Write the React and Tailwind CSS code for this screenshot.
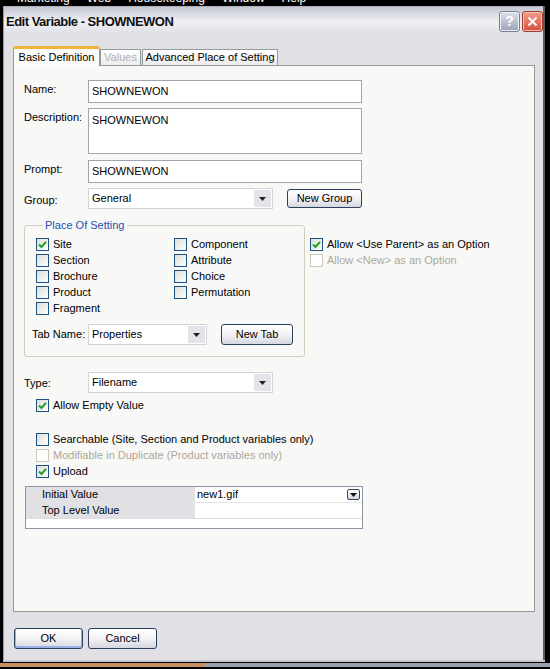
import React from "react";

const Check = () => (
  <svg width="11" height="11" viewBox="0 0 11 11">
    <path d="M2 5.5 L4.5 8 L9 2.8" fill="none" stroke="#21a121" strokeWidth="2" />
  </svg>
);

function Cb({ checked, disabled, label }) {
  return (
    <div className="flex items-center h-[16px]">
      <span
        className={
          disabled
            ? "w-[13px] h-[13px] border border-[#cac8bb] bg-white flex items-center justify-center shrink-0"
            : "w-[13px] h-[13px] border border-[#1c5180] bg-gradient-to-br from-[#dcdcd7] to-white flex items-center justify-center shrink-0"
        }
      >
        {checked && <Check />}
      </span>
      <span className={disabled ? "ml-[4px] text-[#aca899] whitespace-nowrap" : "ml-[4px] text-black whitespace-nowrap"}>
        {label}
      </span>
    </div>
  );
}

function Select({ value, className }) {
  return (
    <div className={"flex items-stretch border border-[#d4d4d4] bg-white " + className}>
      <span className="flex-1 pl-[3px] flex items-center text-[11px] text-black">{value}</span>
      <span className="w-[17px] m-[1px] bg-[#e3e3e9] flex items-center justify-center">
        <svg width="7" height="4" viewBox="0 0 7 4">
          <path d="M0 0 H7 L3.5 4 Z" fill="#222" />
        </svg>
      </span>
    </div>
  );
}

function Btn({ children, className, def }) {
  return (
    <div
      className={
        "flex items-center justify-center rounded-[3px] border border-[#2c3e5e] bg-gradient-to-b from-white via-[#f3f3f6] to-[#d6d6e0] text-[11px] text-black " +
        (def ? "shadow-[inset_0_-1px_0_1px_#9db1e6] " : "") +
        className
      }
    >
      {children}
    </div>
  );
}

export default function App() {
  return (
    <div className="w-[550px] h-[669px] bg-black overflow-hidden flex flex-col font-['Liberation_Sans',Arial,sans-serif] text-[11px]">
      {/* clipped menu strip */}
      <div className="h-[6px] overflow-hidden shrink-0">
        <div className="flex text-white text-[12px] leading-[14px] -mt-[9px] pl-[17px] gap-[17px]">
          <span>Marketing</span>
          <span>Web</span>
          <span>Housekeeping</span>
          <span>Window</span>
          <span>Help</span>
        </div>
      </div>

      {/* window */}
      <div className="ml-[3px] w-[542px] h-[654px] shrink-0 flex flex-col border-l border-[#9a9aa6] border-r-[2px] border-r-[#5a5a64]">
        {/* title bar */}
        <div className="h-[30px] shrink-0 flex items-center justify-between bg-gradient-to-b from-[#c4c6d2] via-[#f0f0f4] to-[#dcdde5] border-t border-[#b0b0bc]">
          <span className="pl-[2px] font-bold text-[13px] tracking-[-0.5px] text-[#101010]">Edit Variable - SHOWNEWON</span>
          <div className="flex gap-[2px]">
            <div className="w-[21px] h-[21px] rounded-[3px] border border-[#7a8094] bg-gradient-to-b from-[#dfe2ec] to-[#9aa2b8] flex items-center justify-center text-white font-bold text-[14px] shadow-[inset_0_0_0_1px_#eef0f6]">
              ?
            </div>
            <div className="w-[21px] h-[21px] rounded-[3px] border border-[#a43a30] bg-gradient-to-b from-[#ef9c88] to-[#d4503e] flex items-center justify-center shadow-[inset_0_0_0_1px_#f6c2b6]">
              <svg width="11" height="11" viewBox="0 0 11 11">
                <path d="M1.5 1.5 L9.5 9.5 M9.5 1.5 L1.5 9.5" stroke="white" strokeWidth="2" />
              </svg>
            </div>
          </div>
        </div>

        {/* body */}
        <div className="flex-1 bg-[#e1e0e5] flex flex-col pl-[9px] pt-[9px]">
          {/* tabs */}
          <div className="flex items-end h-[20px]">
            <div className="h-[20px] w-[87px] bg-[#fbfbfa] border-x border-[#919b9c] rounded-t-[3px] border-t-[3px] border-t-[#f0b43c] flex items-center justify-center text-[11px] text-black relative z-10 -mb-px">
              Basic Definition
            </div>
            <div className="h-[16px] w-[41px] bg-gradient-to-b from-white to-[#ececec] border border-b-0 border-[#919b9c] flex items-center justify-center text-[11px] text-[#b0b0b0]">
              Values
            </div>
            <div className="h-[16px] w-[136px] ml-[1px] bg-gradient-to-b from-white to-[#ececec] border border-b-0 border-[#919b9c] flex items-center justify-center text-[11px] text-black">
              Advanced Place of Setting
            </div>
          </div>

          {/* panel */}
          <div className="w-[522px] h-[547px] border border-[#919b9c] bg-[#f8f8f7] flex flex-col pl-[10px] pt-[14px] text-[11px]">
            <div className="flex items-start">
              <span className="w-[64px] pt-[1px]">Name:</span>
              <div className="w-[274px] h-[23px] border border-[#a0a6ae] bg-white flex items-center pl-[3px]">SHOWNEWON</div>
            </div>
            <div className="flex items-start mt-[5px]">
              <span className="w-[64px] pt-[1px]">Description:</span>
              <div className="w-[274px] h-[46px] border border-[#a0a6ae] bg-white pl-[3px] pt-[3px]">SHOWNEWON</div>
            </div>
            <div className="flex items-start mt-[6px]">
              <span className="w-[64px] pt-[1px]">Prompt:</span>
              <div className="w-[274px] h-[23px] border border-[#a0a6ae] bg-white flex items-center pl-[3px]">SHOWNEWON</div>
            </div>
            <div className="flex items-start mt-[5px]">
              <span className="w-[64px] pt-[4px]">Group:</span>
              <Select value="General" className="w-[185px] h-[21px]" />
              <Btn className="ml-[14px] mt-[1px] w-[75px] h-[19px]">New Group</Btn>
            </div>

            <div className="flex items-start mt-[10px]">
              <fieldset className="w-[281px] border border-[#d0d0bf] rounded-[3px] pl-[11px] pb-[11px]">
                <legend className="ml-[7px] px-[2px] text-[#1f4fb0] text-[11px] leading-[13px]">Place Of Setting</legend>
                <div className="grid grid-cols-[138px_1fr] mt-[4px]">
                  <Cb checked label="Site" />
                  <Cb label="Component" />
                  <Cb label="Section" />
                  <Cb label="Attribute" />
                  <Cb label="Brochure" />
                  <Cb label="Choice" />
                  <Cb label="Product" />
                  <Cb label="Permutation" />
                  <Cb label="Fragment" />
                </div>
                <div className="flex items-center mt-[8px] -ml-[4px]">
                  <span className="w-[56px] whitespace-nowrap">Tab Name:</span>
                  <Select value="Properties" className="w-[119px] h-[21px]" />
                  <Btn className="ml-[14px] w-[72px] h-[21px]">New Tab</Btn>
                </div>
              </fieldset>
              <div className="ml-[5px] mt-[17px] flex flex-col">
                <Cb checked label="Allow <Use Parent> as an Option" />
                <Cb disabled label="Allow <New> as an Option" />
              </div>
            </div>

            <div className="flex items-start mt-[15px]">
              <span className="w-[64px] pt-[3px]">Type:</span>
              <Select value="Filename" className="w-[185px] h-[21px]" />
            </div>
            <div className="ml-[12px] mt-[4px]">
              <Cb checked label="Allow Empty Value" />
            </div>
            <div className="ml-[12px] mt-[18px] flex flex-col">
              <Cb label="Searchable (Site, Section and Product variables only)" />
              <Cb disabled label="Modifiable in Duplicate (Product variables only)" />
              <Cb checked label="Upload" />
            </div>

            <div className="ml-[1px] mt-[7px] w-[338px] h-[43px] border border-[#8c96a4] bg-white flex flex-col">
              <div className="flex h-[16px] border-b border-[#e4e4e4]">
                <div className="w-[169px] bg-[#e1e0e5] pl-[16px] flex items-center">Initial Value</div>
                <div className="flex-1 flex items-center pl-[2px] justify-between pr-[2px]">
                  <span>new1.gif</span>
                  <span className="w-[13px] h-[11px] rounded-[2px] border border-[#3a4660] bg-gradient-to-b from-white to-[#d0d4e0] flex items-center justify-center">
                    <svg width="7" height="4" viewBox="0 0 7 4">
                      <path d="M0 0 H7 L3.5 4 Z" fill="#111" />
                    </svg>
                  </span>
                </div>
              </div>
              <div className="flex h-[16px] border-b border-[#dcdcdc]">
                <div className="w-[169px] bg-[#e1e0e5] pl-[16px] flex items-center">Top Level Value</div>
                <div className="flex-1" />
              </div>
              <div className="flex-1" />
            </div>
          </div>

          {/* bottom buttons */}
          <div className="flex gap-[5px] mt-[16px] ml-[1px]">
            <Btn def className="w-[69px] h-[21px]">OK</Btn>
            <Btn className="w-[69px] h-[21px]">Cancel</Btn>
          </div>
        </div>
      </div>

      {/* bottom edge */}
      <div className="h-[2px] ml-[3px] w-[542px] bg-[#c8c8d0] shrink-0" />
      <div className="h-[4px] flex shrink-0 mt-[1px]">
        <div className="w-[205px] bg-[#c89060]" />
        <div className="flex-1 bg-[#9aa0b0]" />
      </div>
    </div>
  );
}
